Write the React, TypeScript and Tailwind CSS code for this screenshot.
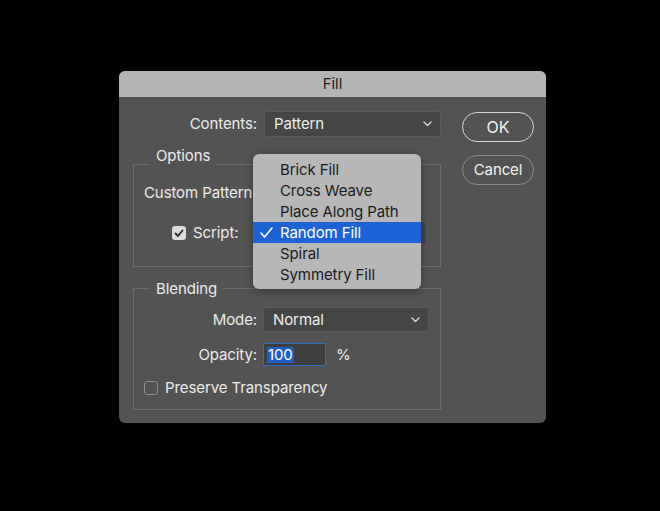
import React from "react";

function Chevron() {
  return (
    <svg width="9" height="6" viewBox="0 0 9 6" className="shrink-0">
      <polyline points="1,1 4.5,4.5 8,1" fill="none" stroke="#d8d8d8" strokeWidth="1.4" strokeLinecap="round" strokeLinejoin="round" />
    </svg>
  );
}

function Select({ label, className }: { label: string; className: string }) {
  return (
    <div className={`flex items-center justify-between rounded-[3px] border border-[#5b5b5b] bg-[#454545] pl-[9px] pr-[8px] text-[#ededed] ${className}`}>
      <span>{label}</span>
      <Chevron />
    </div>
  );
}

const patterns = ["Brick Fill", "Cross Weave", "Place Along Path", "Random Fill", "Spiral", "Symmetry Fill"];

export default function App() {
  return (
    <div className="min-h-screen bg-black pt-[71px] pl-[119px] text-[15px] leading-[18px] tracking-[-0.1px]" style={{ fontFamily: "Inter, 'Liberation Sans', sans-serif" }}>
      <div className="relative w-[427px] h-[352px] overflow-hidden rounded-[6px] bg-[#535353]">
        <div className="flex h-[26px] items-center justify-center bg-[#b4b4b4] text-[#222]">Fill</div>

        <div className="flex pl-[14px] pt-[14px]">
          {/* form column */}
          <div className="flex w-[308px] flex-col text-[#ebebeb]">
            <div className="flex h-[26px] items-center">
              <span className="w-[124px] text-right">Contents:</span>
              <Select label="Pattern" className="ml-[7px] h-[26px] w-[177px]" />
            </div>

            <div className="mt-[27px] flex flex-col border border-[#6b6b6b]">
              <div className="-mt-[19px] ml-[16px] h-[20px] w-fit bg-[#535353] px-[6px] leading-[20px]">Options</div>
              <div className="mt-[14px] flex h-[26px] items-center pl-[10px]">Custom Pattern</div>
              <div className="mt-[15px] flex h-[24px] items-center pl-[38px] pr-[13px]">
                <span className="flex h-[14px] w-[14px] items-center justify-center rounded-[3px] bg-[#dcdcdc]">
                  <svg width="10" height="9" viewBox="0 0 10 9">
                    <polyline points="1.5,4.5 4,7 8.5,1.5" fill="none" stroke="#2a2a2a" strokeWidth="1.8" strokeLinecap="round" strokeLinejoin="round" />
                  </svg>
                </span>
                <span className="ml-[7px]">Script:</span>
                <Select label="" className="ml-auto h-[24px] w-[173px] bg-[#404040]" />
              </div>
              <div className="h-[21px]" />
            </div>

            <div className="mt-[21px] flex flex-col border border-[#6b6b6b]">
              <div className="-mt-[10px] ml-[16px] h-[20px] w-fit bg-[#535353] px-[6px] leading-[20px]">Blending</div>
              <div className="mt-[8px] flex h-[25px] items-center">
                <span className="w-[123px] text-right">Mode:</span>
                <Select label="Normal" className="ml-[6px] h-[25px] w-[166px]" />
              </div>
              <div className="mt-[11px] flex h-[23px] items-center">
                <span className="w-[123px] text-right">Opacity:</span>
                <div className="ml-[6px] flex h-[23px] w-[63px] items-center border border-[#2e6cc2] bg-[#3e3e3e] pl-[3px]">
                  <span className="bg-[#1f5fc4] px-[1px] leading-[16px] text-white">100</span>
                </div>
                <span className="ml-[10px]">%</span>
              </div>
              <div className="mt-[15px] flex h-[14px] items-center pl-[10px]">
                <span className="h-[14px] w-[14px] rounded-[3px] border border-[#8c8c8c]" />
                <span className="ml-[7px]">Preserve Transparency</span>
              </div>
              <div className="h-[14px]" />
            </div>
          </div>

          {/* buttons column */}
          <div className="ml-[21px] flex w-[72px] flex-col text-[#f2f2f2]">
            <div className="mt-[1px] flex h-[30px] items-center justify-center rounded-full border-[1.5px] border-[#d6d6d6] text-[16px]">OK</div>
            <div className="mt-[13px] flex h-[30px] items-center justify-center rounded-full border-[1.5px] border-[#8a8a8a]">Cancel</div>
          </div>
        </div>

        {/* open pattern menu */}
        <div className="absolute left-[134px] top-[83px] w-[168px] rounded-[6px] bg-[#b7b7b7] pt-[5px] pb-[4px] shadow-[0_2px_8px_rgba(0,0,0,0.35)]">
          {patterns.map((p) => {
            const on = p === "Random Fill";
            return (
              <div key={p} className={`flex h-[21px] items-center ${on ? "bg-[#1e63d6] text-white" : "text-[#1c1c1c]"}`}>
                <span className="flex w-[27px] pl-[7px]">
                  {on && (
                    <svg width="13" height="11" viewBox="0 0 13 11">
                      <polyline points="1,6 4.5,10 12,1" fill="none" stroke="#ffffff" strokeWidth="1.6" strokeLinecap="round" strokeLinejoin="round" />
                    </svg>
                  )}
                </span>
                <span>{p}</span>
              </div>
            );
          })}
        </div>
      </div>
    </div>
  );
}
